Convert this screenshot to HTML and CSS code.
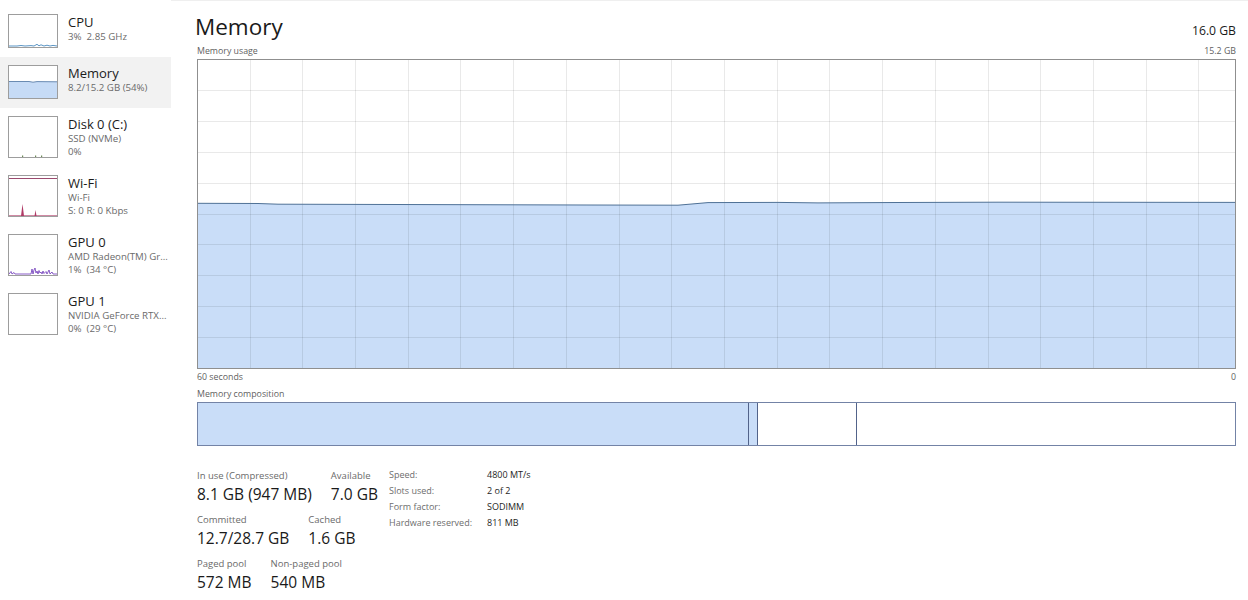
FILE: index.html
```html
<!DOCTYPE html>
<html lang="en">
<head>
<meta charset="utf-8">
<title>Memory</title>
<link rel="stylesheet" href="styles.css">
</head>
<body>
<div class="app">
  <nav class="sidebar">
    <div class="item">
      <div class="thumb">
        <svg viewBox="0 0 48 32" preserveAspectRatio="none">
          <polyline points="0,31 8,31 12,30.5 16,31 22,30.6 25,31 28,29.3 30,30.8 32,29.8 35,31 38,30.2 41,31 44,30.4 48,31" fill="none" stroke="#5b95c4" stroke-width="1"/>
        </svg>
      </div>
      <div class="info">
        <div class="title">CPU</div>
        <div class="sub">3%&nbsp; 2.85 GHz</div>
      </div>
    </div>
    <div class="item selected">
      <div class="thumb">
        <svg viewBox="0 0 48 32" preserveAspectRatio="none">
          <path d="M0,15.5 L20,15.5 L24,16.2 L28,15.6 L48,15.8 L48,32 L0,32 Z" fill="#c6dbf6"/>
          <polyline points="0,15.5 20,15.5 24,16.2 28,15.6 48,15.8" fill="none" stroke="#6a8bb2" stroke-width="1"/>
        </svg>
      </div>
      <div class="info">
        <div class="title">Memory</div>
        <div class="sub">8.2/15.2 GB (54%)</div>
      </div>
    </div>
    <div class="item">
      <div class="thumb">
        <svg viewBox="0 0 48 40" preserveAspectRatio="none">
          <rect x="13" y="38.5" width="1.2" height="1.5" fill="#6d8a58"/>
          <rect x="26" y="38.5" width="1.2" height="1.5" fill="#6d8a58"/>
          <rect x="32" y="38.5" width="1.2" height="1.5" fill="#6d8a58"/>
        </svg>
      </div>
      <div class="info">
        <div class="title">Disk 0 (C:)</div>
        <div class="sub">SSD (NVMe)</div>
        <div class="sub">0%</div>
      </div>
    </div>
    <div class="item">
      <div class="thumb">
        <svg viewBox="0 0 48 40" preserveAspectRatio="none">
          <line x1="0" y1="2.5" x2="48" y2="2.5" stroke="#9a4a6e" stroke-width="1"/>
          <path d="M12,40 L13.5,28 L15,40 Z" fill="#b03a66"/>
          <path d="M25.5,40 L26.5,34 L27.5,40 Z" fill="#b03a66"/>
          <line x1="0" y1="39.5" x2="48" y2="39.5" stroke="#b03a66" stroke-width="0.6"/>
        </svg>
      </div>
      <div class="info">
        <div class="title">Wi-Fi</div>
        <div class="sub">Wi-Fi</div>
        <div class="sub">S: 0 R: 0 Kbps</div>
      </div>
    </div>
    <div class="item">
      <div class="thumb">
        <svg viewBox="0 0 48 40" preserveAspectRatio="none">
          <polyline points="0,39 2,36.5 3,39 5,37.5 6,39 22,39 23,34 24,39 25,35 26,33 27,38 28,36 29,39 30,35.5 31,38 32,37 33,39 34,36 35,38.5 37,36.5 38,39 40,35 41,39 43,37 44,39 48,39" fill="none" stroke="#7a49bf" stroke-width="0.9"/>
        </svg>
      </div>
      <div class="info">
        <div class="title">GPU 0</div>
        <div class="sub">AMD Radeon(TM) Gr...</div>
        <div class="sub">1%&nbsp; (34 °C)</div>
      </div>
    </div>
    <div class="item">
      <div class="thumb">
        <svg viewBox="0 0 48 40" preserveAspectRatio="none"></svg>
      </div>
      <div class="info">
        <div class="title">GPU 1</div>
        <div class="sub">NVIDIA GeForce RTX...</div>
        <div class="sub">0%&nbsp; (29 °C)</div>
      </div>
    </div>
  </nav>

  <main class="main">
    <header class="head">
      <h1 class="page-title">Memory</h1>
      <span class="total">16.0 GB</span>
    </header>
    <div class="caption-row usage-caption"><span>Memory usage</span><span>15.2 GB</span></div>
    <div class="graph">
      <svg viewBox="0 0 1037 308" preserveAspectRatio="none">
        <path d="M0,143.3 L60,143.5 L80,144.2 L390,145 L480,145.2 L510,142.6 L580,142.4 L620,142.9 L700,142.5 L800,142.2 L1037,142.4 L1037,308 L0,308 Z" fill="#c9ddf8"/>
        <g stroke="#000" stroke-opacity="0.085" stroke-width="1">
          <line x1="52.5" y1="0" x2="52.5" y2="308"/>
          <line x1="104.5" y1="0" x2="104.5" y2="308"/>
          <line x1="157.5" y1="0" x2="157.5" y2="308"/>
          <line x1="210.5" y1="0" x2="210.5" y2="308"/>
          <line x1="262.5" y1="0" x2="262.5" y2="308"/>
          <line x1="315.5" y1="0" x2="315.5" y2="308"/>
          <line x1="368.5" y1="0" x2="368.5" y2="308"/>
          <line x1="421.5" y1="0" x2="421.5" y2="308"/>
          <line x1="473.5" y1="0" x2="473.5" y2="308"/>
          <line x1="526.5" y1="0" x2="526.5" y2="308"/>
          <line x1="579.5" y1="0" x2="579.5" y2="308"/>
          <line x1="631.5" y1="0" x2="631.5" y2="308"/>
          <line x1="684.5" y1="0" x2="684.5" y2="308"/>
          <line x1="737.5" y1="0" x2="737.5" y2="308"/>
          <line x1="790.5" y1="0" x2="790.5" y2="308"/>
          <line x1="842.5" y1="0" x2="842.5" y2="308"/>
          <line x1="895.5" y1="0" x2="895.5" y2="308"/>
          <line x1="948.5" y1="0" x2="948.5" y2="308"/>
          <line x1="1000.5" y1="0" x2="1000.5" y2="308"/>
          <line x1="0" y1="30.5" x2="1037" y2="30.5"/>
          <line x1="0" y1="61.5" x2="1037" y2="61.5"/>
          <line x1="0" y1="92.5" x2="1037" y2="92.5"/>
          <line x1="0" y1="123.5" x2="1037" y2="123.5"/>
          <line x1="0" y1="154.5" x2="1037" y2="154.5"/>
          <line x1="0" y1="184.5" x2="1037" y2="184.5"/>
          <line x1="0" y1="215.5" x2="1037" y2="215.5"/>
          <line x1="0" y1="246.5" x2="1037" y2="246.5"/>
          <line x1="0" y1="277.5" x2="1037" y2="277.5"/>
        </g>
        <polyline points="0,143.3 60,143.5 80,144.2 390,145 480,145.2 510,142.6 580,142.4 620,142.9 700,142.5 800,142.2 1037,142.4" fill="none" stroke="#4f7196" stroke-width="1"/>
      </svg>
    </div>
    <div class="caption-row axis"><span>60 seconds</span><span>0</span></div>
    <div class="caption-row comp-caption"><span>Memory composition</span></div>
    <div class="composition">
      <div class="seg used" style="width:53.13%"></div>
      <div class="seg used" style="width:0.87%"></div>
      <div class="seg" style="width:9.55%"></div>
      <div class="seg free"></div>
    </div>

    <section class="stats">
      <div class="stat-block">
        <div class="stat-row">
          <div class="stat"><div class="label">In use (Compressed)</div><div class="value">8.1 GB (947 MB)</div></div>
          <div class="stat"><div class="label">Available</div><div class="value">7.0 GB</div></div>
        </div>
        <div class="stat-row">
          <div class="stat"><div class="label">Committed</div><div class="value">12.7/28.7 GB</div></div>
          <div class="stat"><div class="label">Cached</div><div class="value">1.6 GB</div></div>
        </div>
        <div class="stat-row">
          <div class="stat"><div class="label">Paged pool</div><div class="value">572 MB</div></div>
          <div class="stat"><div class="label">Non-paged pool</div><div class="value">540 MB</div></div>
        </div>
      </div>
      <dl class="details">
        <dt>Speed:</dt><dd>4800 MT/s</dd>
        <dt>Slots used:</dt><dd>2 of 2</dd>
        <dt>Form factor:</dt><dd>SODIMM</dd>
        <dt>Hardware reserved:</dt><dd>811 MB</dd>
      </dl>
    </section>
  </main>
</div>
</body>
</html>
```

FILE: styles.css
```css
html, body {
  margin: 0;
  padding: 0;
  background: #ffffff;
}

body {
  font-family: "Open Sans", "Noto Sans", sans-serif;
  color: #1a1a1a;
}

.app {
  display: flex;
  height: 600px;
}

/* Sidebar */
.sidebar {
  width: 171px;
  flex: none;
  padding-top: 6px;
}

.item {
  display: flex;
  align-items: flex-start;
  gap: 10px;
  padding: 8px 0 9px 8px;
}

.item.selected {
  background: #f2f2f2;
}

.thumb {
  width: 50px;
  flex: none;
  box-sizing: border-box;
  border: 1px solid #9d9d9d;
  background: #ffffff;
}

.thumb svg {
  display: block;
  width: 48px;
  height: auto;
}

.info {
  min-width: 0;
}

.title {
  font-size: 13px;
  line-height: 16px;
  color: #1b1b1b;
}

.sub {
  font-size: 9.7px;
  line-height: 13px;
  color: #6a6a6a;
  white-space: nowrap;
}

/* Main */
.main {
  flex: 1;
  min-width: 0;
  padding: 11px 12px 0 26px;
  border-top: 1px solid #efefef;
}

.head {
  display: flex;
  justify-content: space-between;
  align-items: baseline;
  height: 30px;
}

.page-title {
  margin: 0 0 0 -2px;
  font-size: 22.5px;
  font-weight: 400;
  line-height: 30px;
  color: #1a1a1a;
}

.total {
  font-size: 12.2px;
  color: #1a1a1a;
}

.caption-row {
  display: flex;
  justify-content: space-between;
  font-size: 8.8px;
  line-height: 12px;
  color: #5f5f5f;
}

.usage-caption {
  margin-top: 3px;
}

.graph {
  margin-top: 2px;
  height: 308px;
  border: 1px solid #8f8f8f;
}

.graph svg {
  display: block;
  width: 100%;
  height: 100%;
}

.axis {
  margin-top: 2px;
}

.comp-caption {
  margin-top: 5px;
}

.composition {
  margin-top: 2px;
  height: 42px;
  display: flex;
  border: 1px solid #7383a6;
}

.seg {
  box-sizing: border-box;
  border-right: 1px solid #52638a;
  background: #ffffff;
}

.seg.used {
  background: #c9ddf8;
}

.seg.free {
  flex: 1;
  border-right: none;
}

/* Stats */
.stats {
  display: flex;
  margin-top: 22px;
}

.stat-block {
  width: 192px;
  flex: none;
  display: flex;
  flex-direction: column;
  gap: 7px;
}

.stat-row {
  display: flex;
  gap: 19px;
}

.label {
  font-size: 9.5px;
  line-height: 15px;
  color: #6a6a6a;
  white-space: nowrap;
}

.value {
  font-size: 15.5px;
  line-height: 22px;
  color: #1a1a1a;
  white-space: nowrap;
}

.details {
  margin: -1px 0 0 0;
  display: grid;
  grid-template-columns: 98px auto;
  align-content: start;
  font-size: 9px;
  line-height: 16px;
}

.details dt {
  color: #6d6d6d;
  white-space: nowrap;
}

.details dd {
  margin: 0;
  color: #262626;
  white-space: nowrap;
}
```
